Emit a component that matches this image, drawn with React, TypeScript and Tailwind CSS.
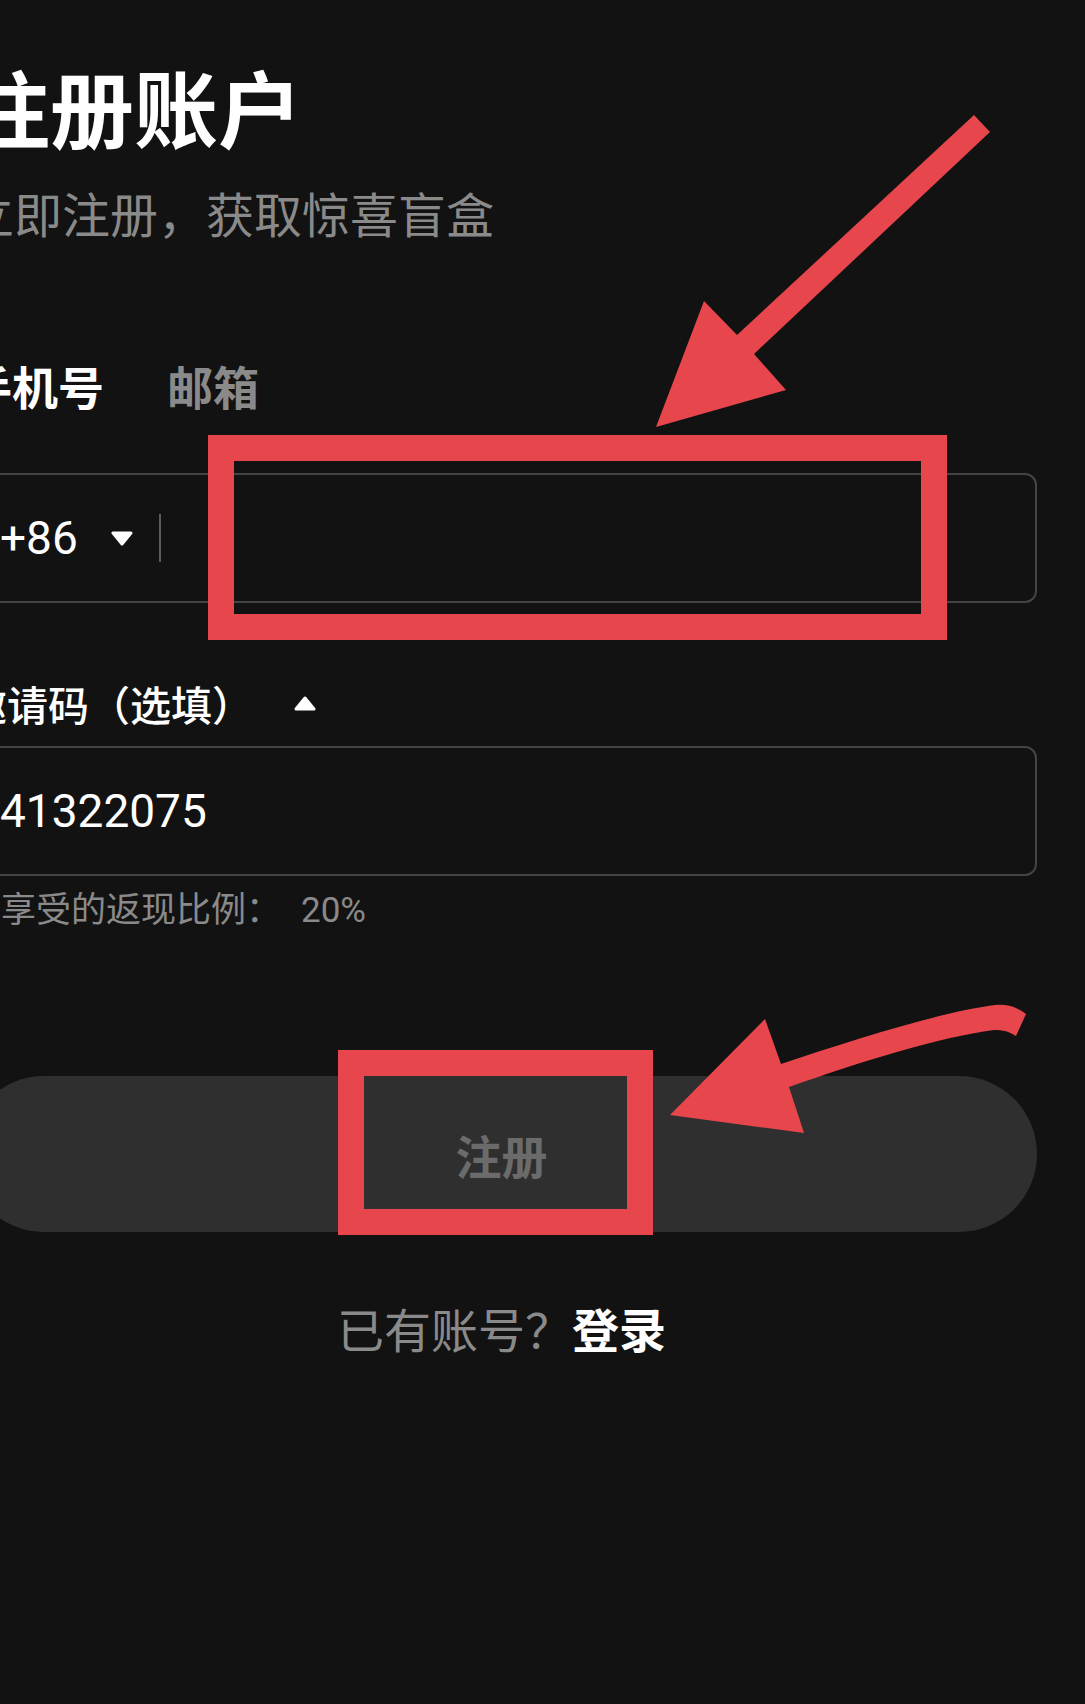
import React from "react";

const RED = "#e8464d";

function Caret({ up = false }: { up?: boolean }) {
  return (
    <svg width="22" height="15" viewBox="0 0 22 15" className="shrink-0">
      <polygon
        points={up ? "11,2 20,13 2,13" : "2,2 20,2 11,13"}
        fill="#ffffff"
        stroke="#ffffff"
        strokeWidth="3"
        strokeLinejoin="round"
      />
    </svg>
  );
}

// red hand-drawn annotations laid over the screenshot
function Annotations() {
  return (
    <svg
      className="pointer-events-none absolute left-0 top-0"
      width="1085"
      height="1704"
      viewBox="0 0 1085 1704"
    >
      <rect x="221" y="448" width="713" height="179" fill="none" stroke={RED} strokeWidth="26" />
      <polygon
        points="974,115 990,132 754,354 786,390 656,427 704,301 737,335"
        fill={RED}
      />
      <rect x="351" y="1063" width="289" height="159" fill="none" stroke={RED} strokeWidth="26" />
      <path
        d="M781,1064 C850,1041 940,1012 995,1005 Q1012,1003 1026,1014 L1016,1036 Q1006,1029 994,1030 C940,1037 860,1062 789,1087 L804,1133 L670,1115 L765,1019 Z"
        fill={RED}
      />
    </svg>
  );
}

export default function App() {
  return (
    <div className="relative h-[1704px] w-[1085px] overflow-hidden bg-[#121212] font-['Noto_Sans_CJK_SC',sans-serif]">
      <div className="ml-[-34px] flex w-[1071px] flex-col pt-[64px]">
        {/* heading */}
        <h1 className="h-[84px] text-[84px] font-bold leading-[84px] text-white">注册账户</h1>
        <p className="mt-[40px] h-[48px] text-[48px] leading-[48px] text-[#8a8a8a]">
          立即注册，获取惊喜盲盒
        </p>

        {/* tabs */}
        <div className="mt-[126px] flex h-[46px] gap-[63px] text-[46px] font-bold leading-[46px]">
          <span className="text-white">手机号</span>
          <span className="text-[#8a8a8a]">邮箱</span>
        </div>

        {/* phone input */}
        <div className="mt-[65px] flex h-[130px] items-center rounded-[12px] border-2 border-[#444444] pl-[32px]">
          <span className="font-[Roboto] text-[46px] leading-none text-white">+86</span>
          <span className="ml-[33px] flex">
            <Caret />
          </span>
          <span className="ml-[26px] h-[48px] w-[2px] bg-[#5c5c5c]" />
        </div>

        {/* invite code */}
        <div className="mt-[80px] flex h-[41px] items-center text-[41px] font-medium leading-[41px] text-white">
          <span>邀请码（选填）</span>
          <span className="ml-[41px] flex">
            <Caret up />
          </span>
        </div>
        <div className="mt-[22px] flex h-[130px] items-center rounded-[12px] border-2 border-[#444444] pl-[32px]">
          <span className="font-[Roboto] text-[46px] leading-none text-white">41322075</span>
        </div>
        <p className="mt-[13px] h-[35px] text-[35px] leading-[35px] text-[#8a8a8a]">
          您享受的返现比例：<span className="ml-[20px] font-[Roboto]">20%</span>
        </p>

        {/* submit */}
        <button className="mt-[152px] flex h-[156px] items-center justify-center rounded-full bg-[#2f2f2f] text-[46px] font-bold text-[#6b6b6b]">
          注册
        </button>

        <p className="mt-[72px] h-[47px] text-center text-[47px] leading-[47px] text-[#8a8a8a]">
          已有账号？<span className="font-bold text-white">登录</span>
        </p>
      </div>

      <Annotations />
    </div>
  );
}
